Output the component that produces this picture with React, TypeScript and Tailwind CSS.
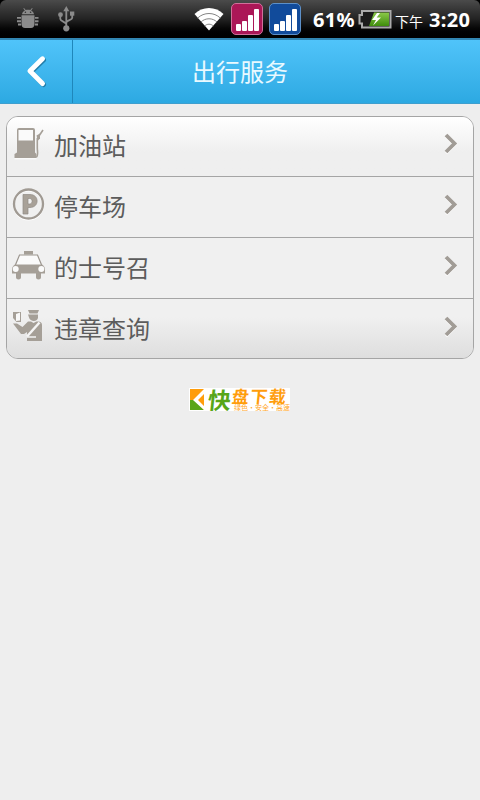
import type { ReactNode } from "react";

function AndroidIcon() {
  return (
    <svg width="22" height="22" viewBox="0 0 22 22" fill="#8b8b8b">
      <path d="M5 6.200C5.300 4 7 2.800 7.900 2.400L6.300.4l.7-.4 1.700 2c1.300-.5 3.300-.5 4.600 0l1.700-2 .7.400-1.600 2c.9.400 2.600 1.600 2.900 3.800z" />
      <path d="M4.500 7.200h13v9c0 2-1.400 3.800-3.500 3.800H8c-2.100 0-3.500-1.800-3.500-3.800z" />
      <path d="M0 9h4v1.800H0zM0 12.300h4v2H0zM1 15.500h3v2H1zM18 9h3.500v1.800H18zM18 12.300h3.500v2H18zM18 15.500h3v2h-3z" />
      <circle cx="8.400" cy="4.300" r=".8" fill="#333" />
      <circle cx="13.600" cy="4.300" r=".8" fill="#333" />
    </svg>
  );
}

function UsbIcon() {
  return (
    <svg width="17" height="26" viewBox="0 0 17 26" fill="none" stroke="#8b8b8b" strokeWidth="1.800">
      <path d="M8.300 4v18M2.300 9v4c0 2.300 6 3 6 5.500M14.200 8v4c0 2.300-5.900 2-5.900 4.700" />
      <path d="M5.300 5.300 8.300 0l3 5.300z" fill="#8b8b8b" stroke="none" />
      <circle cx="8.300" cy="22.300" r="3.100" fill="#8b8b8b" stroke="none" />
      <circle cx="2.500" cy="8.700" r="2.400" fill="#8b8b8b" stroke="none" />
      <path d="M12 5.500h4.300v4.200H12z" fill="#8b8b8b" stroke="none" />
    </svg>
  );
}

function WifiIcon() {
  return (
    <svg width="30" height="24" viewBox="0 0 30 24">
      <path d="M0.500 7C8-1 22-1 29.500 7L15 23.500z" fill="#fff" />
      <g fill="none" stroke="#858585" strokeWidth="1">
        <path d="M3.700 11c6.300-6 16.300-6 22.600 0" />
        <path d="M7 15c4.300-4.300 11.700-4.300 16 0" />
        <path d="M10.800 19c2-2.400 6.400-2.400 8.400 0" />
      </g>
    </svg>
  );
}

function SignalIcon({ className }: { className: string }) {
  return (
    <div className={`h-8 w-8 rounded-[5px] border ${className}`}>
      <svg width="30" height="30" viewBox="0 0 30 30" fill="#fff">
        <rect x="4" y="20" width="5" height="7" rx="1" />
        <rect x="10" y="17" width="5" height="10" rx="1" />
        <rect x="16" y="11" width="5" height="16" rx="1" />
        <rect x="22" y="5" width="5" height="22" rx="1" />
      </svg>
    </div>
  );
}

function BatteryIcon() {
  return (
    <svg width="34" height="20" viewBox="0 0 34 20">
      <defs>
        <linearGradient id="charge" x2="0" y2="1">
          <stop stopColor="#8cc94a" />
          <stop offset="1" stopColor="#3f8d0c" />
        </linearGradient>
      </defs>
      <path d="M4 2h28.500v16.500H4v-4H1.500v-8.500H4z" fill="#1c1c1c" stroke="#aaa" strokeWidth="2" />
      <path d="M16 3.500h15v13.500H11z" fill="url(#charge)" />
      <path d="m19 4-5 7h4l-3 5.500 8-8h-4.300L22 4z" fill="#fff" />
    </svg>
  );
}

function FuelIcon() {
  return (
    <svg width="34" height="34" viewBox="0 0 34 34" fill="#a59f97">
      <path d="M5 3q0-2 2-2h14q2 0 2 2v22.500l1.500 1.500v4h-22v-4L5 25.500z" />
      <path d="M6.500 3h14.500v10.500H6.500z" fill="#fafafa" />
      <path d="M24.300 30c2.300-1 1-6 1-9V11.500L31 3" fill="none" stroke="#a59f97" strokeWidth="1.600" />
      <path d="M24.500 8.500 28 6.500v5l-2 2z" />
      <path d="M2.500 31.800h22" stroke="#fff" />
    </svg>
  );
}

function ParkingIcon() {
  return (
    <svg width="34" height="34" viewBox="0 0 34 34" fill="none">
      <circle cx="16.500" cy="18" r="14.500" stroke="#fff" strokeWidth="2" />
      <circle cx="16.500" cy="17" r="14.500" stroke="#a09a93" strokeWidth="2.300" />
      <path fillRule="evenodd" fill="#a8a198" stroke="#8f8a84" strokeWidth=".7" d="M11 7.500h7c9.500 0 9.500 13 0 13h-2V27h-5zM16 11.500v5.500h1.500c3.500 0 3.500-5.500 0-5.500z" />
    </svg>
  );
}

function TaxiIcon() {
  return (
    <svg width="34" height="34" viewBox="0 0 34 34" fill="#a59f97">
      <path d="M12 3h9v3.500h-9z" />
      <path d="M7.500 7h18L30 18H3z" fill="#fafafa" stroke="#9b958e" strokeWidth="1.200" />
      <path d="M3 16.500h27c2 1 3 3 3 5v4H0v-4c0-2 1-4 3-5zM4 25h5v4.500q0 2-2.500 2T4 29.500zM24 25h5v4.500q0 2-2.500 2t-2.500-2z" />
      <circle cx="3.700" cy="21" r="3" fill="#fafafa" />
      <circle cx="29.300" cy="21" r="3" fill="#fafafa" />
    </svg>
  );
}

function PoliceIcon() {
  return (
    <svg width="34" height="34" viewBox="0 0 34 34" fill="#a59f97">
      <path d="M16 1h11l-1.500 3.500h-8zM16 5.500h10v3c0 4.500-8 4.500-9 0z" />
      <path d="M1 14.500h4l5.500 3.500 5.500-5.500h3l2.500 1.500 3-1.500H26q4 0 4 3.500v16H15v-9l-3 2H9z" />
      <path d="M27.500 13.500 15 27.500" stroke="#f5f5f5" strokeWidth="2.500" />
      <path d="M15 28h9" stroke="#f5f5f5" strokeWidth="1.500" />
      <path d="M1 3h8v10H4.500L1 9z" />
      <path d="M4 5 8 3.500v8l-4 .5z" fill="#f8f8f8" />
    </svg>
  );
}

function ArrowIcon() {
  return (
    <svg width="14" height="22" viewBox="0 0 14 22" fill="none">
      <path d="m2 3 8.500 8.500L2 20" stroke="#fff" strokeWidth="3.500" />
      <path d="m2 2 8.500 8.500L2 19" stroke="#a19c96" strokeWidth="3.800" />
    </svg>
  );
}

function StatusBar() {
  return (
    <div className="bg-black">
      <div className="flex h-[38px] items-start rounded-t-[6px] bg-linear-to-b from-[#4b4b4b] via-[#232323] to-black text-white">
        <div className="flex w-[194px] gap-[19px] pt-[6px] pl-[17px]">
          <div className="pt-[2px]">
            <AndroidIcon />
          </div>
          <UsbIcon />
        </div>
        <div className="pt-[7px]">
          <WifiIcon />
        </div>
        <div className="ml-[7px] flex gap-[6px] pt-[3px]">
          <SignalIcon className="border-[#d0709a] bg-[#ab1757]" />
          <SignalIcon className="border-[#5d90c8] bg-[#114b9b]" />
        </div>
        <span className="ml-[12px] w-[45px] pt-[6px] font-['Noto_Sans',sans-serif] text-[20px] leading-[28px] font-bold tracking-[0.300px]">
          61%
        </span>
        <div className="pt-[9px]">
          <BatteryIcon />
        </div>
        <span className="ml-[3px] w-[34px] pt-[11px] font-['Noto_Sans_CJK_SC',sans-serif] text-[14px] leading-[20px] whitespace-nowrap">
          下午
        </span>
        <span className="pt-[6px] font-['Noto_Sans',sans-serif] text-[20px] leading-[28px] font-bold tracking-[0.300px]">
          3:20
        </span>
      </div>
    </div>
  );
}

function Header() {
  return (
    <header className="flex h-[66px] border-t-2 border-b border-t-[#3186b2] border-b-[#3f9fce] bg-linear-to-b from-[#50c4fa] to-[#2ca9e2]">
      <button className="flex w-[73px] items-center justify-center border-r border-[#1f87bb]" aria-label="返回">
        <svg width="22" height="34" viewBox="0 0 22 34" fill="none" strokeLinecap="round" strokeLinejoin="round">
          <path d="M18.500 5 6 17l12.500 12.500" stroke="#237eaa" strokeWidth="5" />
          <path d="M17.500 3.800 5 16l12.500 12.500" stroke="#fff" strokeWidth="5" />
        </svg>
      </button>
      <h1 className="flex-1 pr-[73px] text-center text-[24px] leading-[62px] text-[#e9f9ff]">出行服务</h1>
    </header>
  );
}

const services: { name: string; icon: ReactNode; row: string }[] = [
  { name: "加油站", icon: <div className="pt-px"><FuelIcon /></div>, row: "h-[60px] border-b bg-linear-to-b from-white to-[#efefef] to-60%" },
  { name: "停车场", icon: <ParkingIcon />, row: "h-[61px] border-b pt-px" },
  { name: "的士号召", icon: <TaxiIcon />, row: "h-[61px] border-b pt-px" },
  { name: "违章查询", icon: <PoliceIcon />, row: "h-[59px] bg-linear-to-b from-[#f0f0f0] from-30% to-[#dedede] pt-px" },
];

function ServiceList() {
  return (
    <ul className="mx-[6px] mt-[12px] overflow-hidden rounded-[12px] border border-[#a5a5a5] bg-[#f0f0f0]">
      {services.map((service) => (
        <li key={service.name} className={`flex items-start border-[#a5a5a5] pr-[15px] pl-[5px] ${service.row}`}>
          <div className="pt-[9px]">{service.icon}</div>
          <span className="flex-1 pt-[10px] pl-[8px] text-[24px] leading-[36px] text-[#5c5c5c]">{service.name}</span>
          <div className="pt-[16px]">
            <ArrowIcon />
          </div>
        </li>
      ))}
    </ul>
  );
}

function Brand() {
  return (
    <div className="mr-auto ml-[189px] mt-[29px] flex h-[23px] w-[101px] items-start bg-white whitespace-nowrap">
      <svg className="mt-px shrink-0" width="17" height="22" viewBox="0 0 17 22">
        <path d="M1 0h14v21H1z" fill="#ff9d0b" />
        <path d="M1 11h5l9 10H1z" fill="#5aa518" />
        <path d="M15 0v5l-6 6 6 6v4L4 11z" fill="#fff" />
      </svg>
      <span className="w-[26px] pl-[2px] text-[23px] leading-[22px] font-bold text-[#58a618]">
        <span className="inline-block -skew-x-6">快</span>
      </span>
      <div className="flex flex-col">
        <span className="h-[15px] text-[17px] leading-[15px] font-bold tracking-[1.500px] text-[#ff9d0b]">
          <span className="inline-block -skew-x-6">盘下载</span>
        </span>
        <span className="pl-[2px] text-[7px] leading-[8px] text-[#ffa72a]">绿色·安全·高速</span>
      </div>
    </div>
  );
}

export default function App() {
  return (
    <div className="h-[800px] w-[480px] overflow-hidden bg-[#eeeeee] font-['Noto_Sans_CJK_SC',sans-serif]">
      <StatusBar />
      <Header />
      <ServiceList />
      <Brand />
    </div>
  );
}
